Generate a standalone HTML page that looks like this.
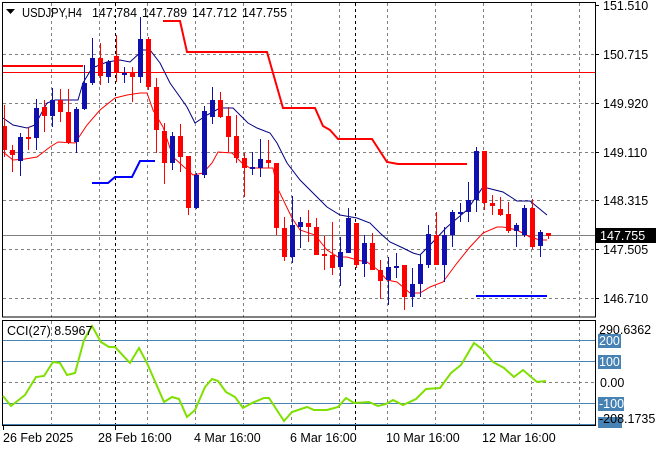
<!DOCTYPE html>
<html><head><meta charset="utf-8"><style>
html,body{margin:0;padding:0;background:#fff;}
svg{display:block;font-family:"Liberation Sans",Arial,sans-serif;}
</style></head><body>
<svg width="660" height="450" viewBox="0 0 660 450" xmlns="http://www.w3.org/2000/svg">
<rect width="660" height="450" fill="#fff"/>
<g stroke="#808080" stroke-width="1" stroke-dasharray="3,3" fill="none">
<path d="M3 54.5H595M3 103.5H595M3 152.5H595M3 200.5H595M3 249.5H595M3 298.5H595"/>
<path d="M51.5 3V317M99.5 3V317M147.5 3V317M195.5 3V317M243.5 3V317M291.5 3V317M339.5 3V317M387.5 3V317M435.5 3V317M483.5 3V317M531.5 3V317M579.5 3V317"/>
<path d="M51.5 321V425M99.5 321V425M147.5 321V425M195.5 321V425M243.5 321V425M291.5 321V425M339.5 321V425M387.5 321V425M435.5 321V425M483.5 321V425M531.5 321V425M579.5 321V425"/>
<path d="M3 382.5H595"/>
</g>
<g stroke="#000" stroke-dasharray="3,3"><path d="M115.5 3V317M355.5 3V317M115.5 321V425M355.5 321V425"/></g>
<path d="M3 235.5H595" stroke="#808080"/>
<path d="M3 72.5H595" stroke="#f00" stroke-width="1"/>
<path d="M3 66H83" stroke="#f00" stroke-width="2"/>
<polyline points="163,21 180,21 187,52 267,52 283,108 315,108 323,126 330,130 338,139 372,139 387,162 398,164 467,164" fill="none" stroke="#f00" stroke-width="2"/>
<polyline points="92,183 108,183 115,177 132,177 140,161 155,161" fill="none" stroke="#0000ff" stroke-width="2"/>
<path d="M476 296H547" stroke="#0000ff" stroke-width="2"/>
<polyline points="3,118 13,125 27,128 35,125 47,103 55,100 67,100 78,100 83,83 92,68 107,62 120,60 130,62 143,50 150,50 160,63 170,83 187,107 195,123 207,115 220,108 233,108 248,123 257,128 270,133 277,143 287,163 300,180 313,193 327,207 340,215 357,218 370,223 380,233 390,242 403,248 413,253 420,255 430,245 447,227 467,210 483,187 503,192 517,201 530,201 547,215" fill="none" stroke="#000080" stroke-width="1"/>
<polyline points="3,152 13,160 25,159 37,157 50,147 58,142 75,143 87,125 100,110 115,98 127,95 140,93 147,93 153,110 163,127 173,157 193,175 203,173 212,163 218,152 232,153 242,163 250,168 267,168 273,168 277,187 292,218 300,230 315,235 327,250 338,257 347,257 357,260 367,262 378,270 387,280 397,282 410,293 420,293 430,287 443,282 457,263 470,247 483,233 497,227 503,227 517,230 530,237 540,240 547,240" fill="none" stroke="#f00" stroke-width="1"/>
<path fill="none" stroke="#f00" stroke-width="1" d="M4.5 105V157M12.5 145V172M28.5 127V150M44.5 100V132M60.5 89V122M68.5 89V144M100.5 43V85M116.5 35V82M132.5 67V102M148.5 37V90M156.5 78V153M164.5 123V184M180.5 124V172M188.5 156V215M220.5 92V118M228.5 107V152M236.5 115V163M244.5 153V197M268.5 140V168M276.5 163V235M284.5 217V261M308.5 210V242M316.5 218V255M324.5 236V270M332.5 222V275M356.5 223V268M372.5 233V270M380.5 260V299M404.5 265V310M436.5 212V265M484.5 151V210M492.5 195V215M500.5 197V216M508.5 202V233M532.5 199V249M548.5 233V239"/>
<path fill="#f00" d="M2 126h5v24h-5zM10 150h5v5h-5zM26 137h5v2h-5zM42 107h5v9h-5zM58 100h5v12h-5zM66 112h5v31h-5zM98 58h5v18h-5zM114 56h5v17h-5zM130 73h5v4h-5zM146 39h5v48h-5zM154 87h5v43h-5zM162 131h5v32h-5zM178 136h5v21h-5zM186 156h5v52h-5zM218 100h5v17h-5zM226 116h5v21h-5zM234 136h5v22h-5zM242 158h5v10h-5zM266 160h5v3h-5zM274 163h5v65h-5zM282 228h5v29h-5zM306 223h5v4h-5zM314 227h5v28h-5zM322 254h5v2h-5zM330 255h5v13h-5zM354 223h5v42h-5zM370 243h5v27h-5zM378 270h5v11h-5zM402 265h5v32h-5zM434 235h5v30h-5zM482 151h5v52h-5zM490 203h5v3h-5zM498 209h5v6h-5zM506 214h5v17h-5zM530 208h5v39h-5zM546 233h5v3h-5z"/>
<path fill="none" stroke="#1010b0" stroke-width="1" d="M20.5 133V176M36.5 99V150M52.5 88V127M76.5 107V153M84.5 65V110M92.5 38V85M108.5 60V83M124.5 67V83M140.5 17V83M172.5 132V170M196.5 173V209M204.5 106V178M212.5 87V124M252.5 152V175M260.5 139V177M292.5 196V263M300.5 217V248M340.5 237V286M348.5 208V253M364.5 235V277M388.5 257V305M396.5 253V278M412.5 268V307M420.5 255V297M428.5 225V268M444.5 227V282M452.5 210V247M460.5 203V222M468.5 182V222M476.5 147V212M516.5 223V247M524.5 205V237M540.5 230V257"/>
<path fill="#1010b0" d="M18 137h5v24h-5zM34 108h5v30h-5zM50 100h5v16h-5zM74 109h5v33h-5zM82 83h5v26h-5zM90 58h5v25h-5zM106 62h5v15h-5zM122 73h5v2h-5zM138 39h5v38h-5zM170 136h5v27h-5zM194 175h5v33h-5zM202 111h5v64h-5zM210 100h5v17h-5zM250 167h5v2h-5zM258 159h5v9h-5zM290 225h5v32h-5zM298 222h5v5h-5zM338 252h5v15h-5zM346 218h5v35h-5zM362 243h5v21h-5zM386 267h5v13h-5zM394 266h5v2h-5zM410 284h5v13h-5zM418 264h5v20h-5zM426 234h5v31h-5zM442 235h5v30h-5zM450 212h5v23h-5zM458 212h5v2h-5zM466 200h5v12h-5zM474 151h5v49h-5zM514 225h5v6h-5zM522 208h5v27h-5zM538 232h5v14h-5z"/>
<rect x="2.5" y="2.5" width="593" height="314.5" fill="none" stroke="#000"/>
<rect x="2.5" y="320.5" width="593" height="105" fill="none" stroke="#000"/>
<path d="M6 9h9l-4.5 5z" fill="#000"/>
<g font-size="13" fill="#000">
<text x="22" y="17" textLength="60" lengthAdjust="spacingAndGlyphs">USDJPY,H4</text>
<text x="92" y="17" textLength="45" lengthAdjust="spacingAndGlyphs">147.784</text>
<text x="142" y="17" textLength="45" lengthAdjust="spacingAndGlyphs">147.789</text>
<text x="192" y="17" textLength="45" lengthAdjust="spacingAndGlyphs">147.712</text>
<text x="242" y="17" textLength="45" lengthAdjust="spacingAndGlyphs">147.755</text>
</g>
<path d="M595 5.5h4M595 54.5h4M595 103.5h4M595 152.5h4M595 200.5h4M595 249.5h4M595 298.5h4" stroke="#000"/>
<g font-size="12.5" fill="#000">
<text x="603" y="10">151.510</text>
<text x="603" y="59">150.715</text>
<text x="603" y="108">149.920</text>
<text x="603" y="157">149.110</text>
<text x="603" y="205">148.315</text>
<text x="603" y="254">147.505</text>
<text x="603" y="303">146.710</text>
</g>
<rect x="596" y="228" width="60" height="15" fill="#000"/>
<text x="600" y="240" font-size="12.5" fill="#fff">147.755</text>
<g stroke="#4682b4" stroke-width="1"><path d="M3 340.5H595M3 361.5H595M3 403.5H595M3 424.5H595"/></g>
<polyline points="3,396 11,406 25,395 36,377 44,376 53,362 60,363 67,375 75,373 84,340 92,326 101,342 109,347 115,347 130,363 139,348 147,363 164,402 172,397 179,399 187,417 195,410 205,387 212,379 218,381 226,392 235,397 243,408 252,403 264,398 269,398 284,421 292,412 307,407 314,410 327,410 338,407 346,398 354,403 369,402 378,406 386,404 393,400 403,405 416,399 426,389 440,388 451,373 461,365 474,343 482,349 493,362 504,368 514,377 523,370 537,382 546,381" fill="none" stroke="#7fe000" stroke-width="2"/>
<text x="7" y="335" font-size="12.5" fill="#000">CCI(27) 8.5967</text>
<g font-size="12.5">
<text x="599" y="334" fill="#000">290.6362</text>
<rect x="598" y="334" width="23" height="14" fill="#4682b4"/>
<text x="599" y="345" fill="#fff">200</text>
<rect x="598" y="355" width="23" height="14" fill="#4682b4"/>
<text x="599" y="366" fill="#fff">100</text>
<text x="600" y="387" fill="#000">0.00</text>
<rect x="598" y="397" width="26" height="14" fill="#4682b4"/>
<text x="599" y="408" fill="#fff">-100</text>
<rect x="598" y="417" width="24" height="11" fill="#4682b4"/>
<text x="599" y="423" fill="#000">-208.1735</text>
</g>
<g font-size="12.5" fill="#000">
<text x="3" y="442">26 Feb 2025</text>
<text x="98" y="442">28 Feb 16:00</text>
<text x="194" y="442">4 Mar 16:00</text>
<text x="290" y="442">6 Mar 16:00</text>
<text x="386" y="442">10 Mar 16:00</text>
<text x="482" y="442">12 Mar 16:00</text>
</g>
<path d="M3.5 426v4M115.5 426v4M355.5 426v4" stroke="#000"/>
</svg>
</body></html>
